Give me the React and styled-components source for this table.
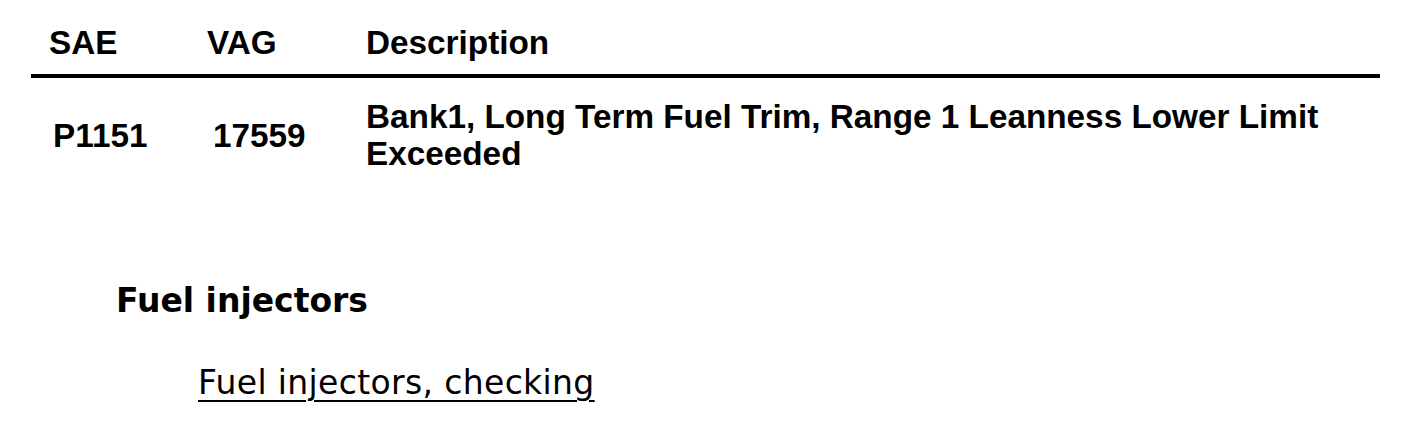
import React from "react";
import styled, { createGlobalStyle } from "styled-components";

const Global = createGlobalStyle`
  html, body {
    margin: 0;
    padding: 0;
    background: #fff;
  }
`;

export default function App() {
  return (
    <Page>
      <Global />
      <Table>
        <HeadRow>
          <Cell>SAE</Cell>
          <Cell>VAG</Cell>
          <Cell>Description</Cell>
        </HeadRow>
        <BodyRow>
          <Cell $shift={4}>P1151</Cell>
          <Cell $shift={6}>17559</Cell>
          <Cell>
            Bank1, Long Term Fuel Trim, Range 1 Leanness Lower Limit
            <br />
            Exceeded
          </Cell>
        </BodyRow>
      </Table>
      <Section>
        <Heading>Fuel injectors</Heading>
        <Link href="#">Fuel injectors, checking</Link>
      </Section>
    </Page>
  );
}

const Page = styled.div`
  width: 1408px;
  height: 424px;
  padding: 20px 28px 0 31px;
  box-sizing: border-box;
  color: #000;
`;

const Table = styled.div`
  display: flex;
  flex-direction: column;
  font-family: "Liberation Sans", Arial, sans-serif;
  font-weight: bold;
  font-size: 33.3px;
`;

const Row = styled.div`
  display: grid;
  grid-template-columns: 158px 159px 1fr;
  padding-left: 18px;
  align-items: center;
`;

const HeadRow = styled(Row)`
  height: 58px;
  border-bottom: 4px solid #000;
  align-items: start;
  padding-top: 4px;
  box-sizing: border-box;
`;

const BodyRow = styled(Row)`
  padding-top: 20px;
  line-height: 37px;
`;

const Cell = styled.div`
  padding-left: ${(p) => p.$shift || 0}px;
`;

const Section = styled.div`
  display: flex;
  flex-direction: column;
  align-items: flex-start;
  padding: 110px 0 0 85px;
`;

const Heading = styled.h2`
  margin: 0;
  font-family: "DejaVu Sans", Verdana, sans-serif;
  font-weight: bold;
  font-size: 33px;
  line-height: 38px;
`;

const Link = styled.a`
  margin: 44px 0 0 82px;
  font-family: "DejaVu Sans", Verdana, sans-serif;
  font-size: 33px;
  line-height: 38px;
  letter-spacing: 0.35px;
  color: #000;
  text-decoration: underline;
  text-underline-offset: 6px;
  text-decoration-thickness: 2px;
`;
